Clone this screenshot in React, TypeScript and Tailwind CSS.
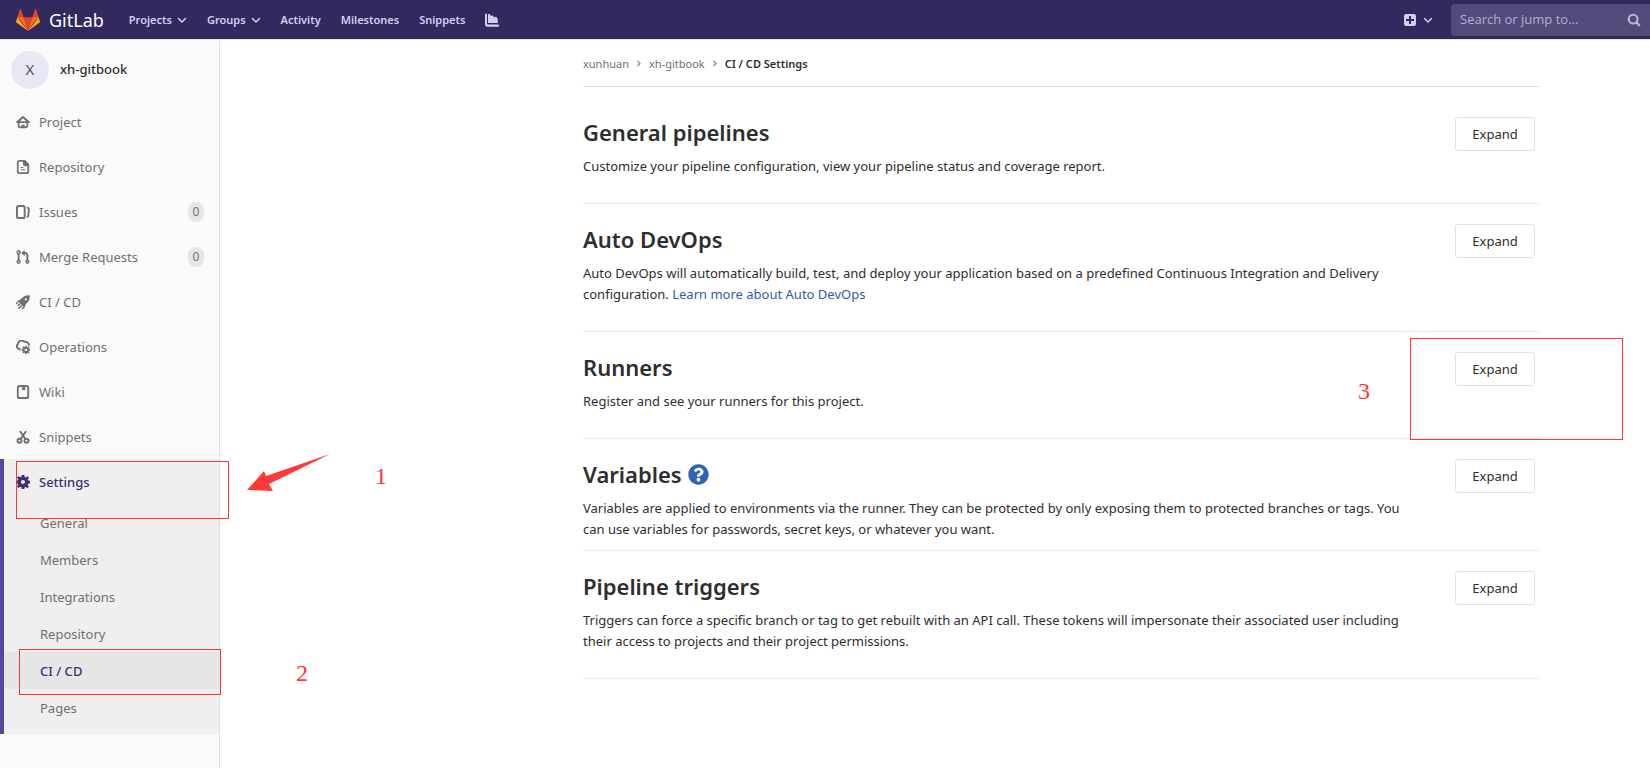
import React from "react";
import { FaQuestionCircle } from "react-icons/fa";

type IconProps = { className?: string };

function GitLabLogo({ className }: IconProps) {
  return (
    <svg viewBox="0 0 36 36" className={className} aria-hidden="true">
      <path fill="#e24329" d="M2 14l9.38 9v-9l-4-12.28c-.205-.632-1.176-.632-1.38 0z" />
      <path fill="#e24329" d="M34 14l-9.38 9v-9l4-12.28c.205-.632 1.176-.632 1.38 0z" />
      <path fill="#e24329" d="M18 34.38 11.38 14h13.24z" />
      <path fill="#fc6d26" d="M18 34.38 11.38 14H2l6 6z" />
      <path fill="#fc6d26" d="M18 34.38 24.62 14H34l-6 6z" />
      <path fill="#fca326" d="M2 14 .1 20.16c-.18.565 0 1.2.5 1.56l17.4 12.66z" />
      <path fill="#fca326" d="M34 14l1.9 6.16c.18.565 0 1.2-.5 1.56L18 34.38z" />
    </svg>
  );
}

function Caret() {
  return (
    <svg viewBox="0 0 10 8" className="h-2 w-[10px]" fill="none" stroke="currentColor" strokeWidth="1.5" strokeLinecap="round" strokeLinejoin="round" aria-hidden="true">
      <path d="m1.500 2.500 3.500 3.500 3.500-3.500" />
    </svg>
  );
}

function Chevron() {
  return (
    <svg viewBox="0 0 6 8" className="h-2 w-[6px]" fill="none" stroke="#888" strokeWidth="1.2" aria-hidden="true">
      <path d="m1.500 1 2.500 2.500-2.500 2.500" />
    </svg>
  );
}

function ChartIcon() {
  return (
    <svg viewBox="0 0 14 14" className="h-[14px] w-[14px] fill-current" aria-hidden="true">
      <path d="M0 1.500A1 1 0 0 1 2 1.500V10.500a1 1 0 0 0 1 1h10a1 1 0 0 1 0 2.200H2.500A2.500 2.500 0 0 1 0 11.200z" />
      <path d="M3 1.200 4.600 .8 6 3l1.500-.8 1.700 2.300L11 3.600l1.800 2.600V10H3z" />
    </svg>
  );
}

const icon = (children: React.ReactNode) => (
  <svg viewBox="0 0 16 16" className="size-[14px] shrink-0 fill-current" aria-hidden="true">
    {children}
  </svg>
);

const gear =
  "M6.500 0h3l.4 2.200 1.400.6L13 1.300 14.900 3.200l-1.400 1.800.6 1.400L16 6.600v2.900l-2 .4-.6 1.400 1.400 1.800-1.900 1.900-1.800-1.400-1.300.6L9.500 16h-3l-.4-2-1.300-.6L3 14.900 1.100 13l1.400-1.800L1.900 9.900 0 9.500v-3l2-.3.600-1.300L1.200 3.100 3.100 1.200l1.800 1.400 1.300-.5zM8 5.700a2.300 2.300 0 1 0 0 4.600 2.300 2.300 0 0 0 0-4.600z";

const icons = {
  project: icon(
    <path
      fillRule="evenodd"
      d="M8.700 1.300a1 1 0 0 0-1.400 0L.4 7.300A1 1 0 0 0 1 9h1v3a3 3 0 0 0 3 3h6a3 3 0 0 0 3-3V9h1a1 1 0 0 0 .6-1.700zM8 3.600 11.500 7h-7zM4 9h8v3a1 1 0 0 1-1 1h-1v-1a1 1 0 0 0-1-1H7a1 1 0 0 0-1 1v1H5a1 1 0 0 1-1-1z"
    />
  ),
  repository: icon(
    <path
      fillRule="evenodd"
      d="M4 0h6.500L15 4.500V13a3 3 0 0 1-3 3H4a3 3 0 0 1-3-3V3a3 3 0 0 1 3-3zm0 2a1 1 0 0 0-1 1v10a1 1 0 0 0 1 1h8a1 1 0 0 0 1-1V7h-3a2 2 0 0 1-2-2V2zm1.500 6h3v1.100h-3zm0 2.500h5v1.100h-5z"
    />
  ),
  issues: icon(
    <>
      <path fillRule="evenodd" d="M3 0h5a3 3 0 0 1 3 3v10a3 3 0 0 1-3 3H3a3 3 0 0 1-3-3V3a3 3 0 0 1 3-3zm0 2.200a.8.8 0 0 0-.8.8v10a.8.8 0 0 0 .8.8h5a.8.8 0 0 0 .8-.8V3a.8.8 0 0 0-.8-.8z" />
      <path d="M12.300 2c2.200.1 3.700 1.700 3.500 3.700l-.7 6.400c-.2 1.600-1.300 2.700-2.800 3v-2.400c.4-.2.600-.5.700-.9l.7-6.400c.1-.7-.5-1.200-1.400-1.300z" />
    </>
  ),
  merge: icon(
    <g fill="none" stroke="currentColor">
      <circle cx="3" cy="2.500" r="1.600" strokeWidth="1.700" />
      <circle cx="3" cy="13.500" r="1.600" strokeWidth="1.700" />
      <circle cx="13" cy="13.500" r="1.600" strokeWidth="1.700" />
      <path strokeWidth="2.200" d="M3 4v8M13 12V6a2.500 2.500 0 0 0-2.500-2.500H8.500" />
      <path fill="currentColor" stroke="none" d="M10 0v7L6 3.500z" />
    </g>
  ),
  rocket: icon(
    <>
      <path fillRule="evenodd" d="M15.600.600c.4 3.500-.6 6.700-4.200 9.700l-1.800 3.900-2-1.600-4.200-4.200L1.800 6.600l3.900-2C8.400 1.400 11.900-.2 15.600.600zM11.200 3.600a1.300 1.300 0 1 0 0 2.600 1.300 1.300 0 0 0 0-2.600z" />
      <path fill="none" stroke="currentColor" strokeWidth="1.800" strokeLinecap="round" d="M4 10.500 2.500 12M6 12.500 3.500 15M9 14 7.500 15.200M2 8.300 .9 9.500" />
    </>
  ),
  operations: icon(
    <>
      <path fill="none" stroke="currentColor" strokeWidth="2.200" strokeLinecap="round" d="M4.500 10.500A3.300 3.300 0 0 1 2 4.800 4.300 4.300 0 0 1 9.500 2c3-.4 5.200 1.200 5.300 3.800" />
      <path fillRule="evenodd" d={gear} transform="translate(6.500 6.500) scale(.6)" />
    </>
  ),
  wiki: icon(
    <path
      fillRule="evenodd"
      d="M4 0h8a3 3 0 0 1 3 3v10a3 3 0 0 1-3 3H4a3 3 0 0 1-3-3V3a3 3 0 0 1 3-3zm0 2.200a.9.9 0 0 0-.9.900v9.800a.9.9 0 0 0 .9.900h8a.9.9 0 0 0 .9-.9V3.100a.9.9 0 0 0-.9-.9h-1.500V6.500L8.800 5.300 7 6.500V2.200z"
    />
  ),
  snippets: icon(
    <g fill="none" stroke="currentColor">
      <circle cx="4" cy="12.300" r="2.300" strokeWidth="2.200" />
      <circle cx="12" cy="12.300" r="2.300" strokeWidth="2.200" />
      <path strokeWidth="2.200" strokeLinecap="round" d="M5.500 10 11 2M10.500 10 5 2" />
    </g>
  ),
  settings: icon(<path fillRule="evenodd" d={gear} />),
};

const navItems = [
  { label: "Project", icon: icons.project },
  { label: "Repository", icon: icons.repository },
  { label: "Issues", icon: icons.issues, count: 0 },
  { label: "Merge Requests", icon: icons.merge, count: 0 },
  { label: "CI / CD", icon: icons.rocket },
  { label: "Operations", icon: icons.operations },
  { label: "Wiki", icon: icons.wiki },
  { label: "Snippets", icon: icons.snippets },
];

const subItems = ["General", "Members", "Integrations", "Repository", "CI / CD", "Pages"];

const sections = [
  {
    title: "General pipelines",
    body: "Customize your pipeline configuration, view your pipeline status and coverage report.",
  },
  {
    title: "Auto DevOps",
    body: "Auto DevOps will automatically build, test, and deploy your application based on a predefined Continuous Integration and Delivery configuration.",
    link: "Learn more about Auto DevOps",
  },
  { title: "Runners", body: "Register and see your runners for this project.", boxed: true },
  {
    title: "Variables",
    body: "Variables are applied to environments via the runner. They can be protected by only exposing them to protected branches or tags. You can use variables for passwords, secret keys, or whatever you want.",
    help: true,
    tight: true,
  },
  {
    title: "Pipeline triggers",
    body: "Triggers can force a specific branch or tag to get rebuilt with an API call. These tokens will impersonate their associated user including their access to projects and their project permissions.",
  },
];

function Header() {
  return (
    <header className="flex h-10 items-center border-b border-[#e5e5e5] bg-[#32295f] text-[#d1d0ee]">
      <a href="#" className="ml-4 flex items-center gap-[9px] text-white">
        <GitLabLogo className="size-6" />
        <span className="text-lg leading-6">GitLab</span>
      </a>
      <nav className="ml-[25px] flex items-center gap-5 text-[11px] font-semibold">
        <a href="#" className="flex items-center gap-[5px]">Projects <Caret /></a>
        <a href="#" className="flex items-center gap-[5px]">Groups <Caret /></a>
        <a href="#">Activity</a>
        <a href="#">Milestones</a>
        <a href="#">Snippets</a>
        <a href="#" aria-label="Instance statistics"><ChartIcon /></a>
      </nav>
      <button aria-label="New" className="ml-auto flex items-center gap-[7px]">
        <svg viewBox="0 0 12 12" className="size-3" aria-hidden="true">
          <rect width="12" height="12" rx="2" fill="#d1d0ee" />
          <path d="M6 2v8M2 6h8" stroke="#32295f" strokeWidth="2" />
        </svg>
        <Caret />
      </button>
      <label className="ml-[18px] flex h-8 w-[199px] items-center rounded-l bg-[#524a7b] pr-[9px] pl-[9px]">
        <input
          aria-label="Search"
          placeholder="Search or jump to..."
          className="w-full min-w-0 bg-transparent font-['Open_Sans',sans-serif] text-[13px] text-white outline-none placeholder:text-[#b3aed4]"
        />
        <svg viewBox="0 0 16 16" className="size-[14px] shrink-0" fill="none" stroke="#b9b5d6" strokeWidth="2.500" strokeLinecap="round" aria-hidden="true">
          <circle cx="7" cy="7" r="5" />
          <path d="m11 11 3 3" />
        </svg>
      </label>
    </header>
  );
}

function Sidebar() {
  return (
    <aside className="relative w-[220px] shrink-0 border-r border-[#e1e1e1] bg-[#fafafa] text-[#707070]">
      <a href="#" className="flex h-[59px] items-center gap-[11px] pl-[11px] font-medium text-[#2e2e2e]">
        <span className="flex size-[38px] items-center justify-center rounded-full bg-[#e8e8f5] text-[15px] font-normal text-[#555]">X</span>
        xh-gitbook
      </a>
      <ul>
        {navItems.map((item) => (
          <li key={item.label}>
            <a href="#" className="flex h-[45px] items-center gap-[9px] pt-px pr-[15px] pl-4">
              {item.icon}
              {item.label}
              {item.count !== undefined && (
                <span className="ml-auto flex h-5 w-4 items-center justify-center rounded-full bg-[#e5e5e5] text-xs">{item.count}</span>
              )}
            </a>
          </li>
        ))}
        <li className="border-l-4 border-[#56489b] bg-[#efefef] pb-2">
          <a href="#" className="flex h-[45px] items-center gap-[9px] pt-px pl-3 font-medium text-[#393077]">
            {icons.settings}
            Settings
          </a>
          <ul>
            {subItems.map((label) => (
              <li key={label}>
                <a
                  href="#"
                  className={
                    label === "CI / CD"
                      ? "flex h-[37px] items-center bg-[#e6e6e6] pt-px pl-9 font-medium text-[#393077]"
                      : "flex h-[37px] items-center pt-px pl-9"
                  }
                >
                  {label}
                </a>
              </li>
            ))}
          </ul>
        </li>
      </ul>
      <Annotations />
    </aside>
  );
}

function Annotations() {
  return (
    <div className="pointer-events-none absolute inset-0 text-[#ff3434]">
      <div className="absolute top-[421px] left-4 h-[58px] w-[213px] border border-[#ff3434]" />
      <svg viewBox="0 0 84 38" className="absolute top-[414px] left-[246px] h-[38px] w-[84px]" aria-hidden="true">
        <path fill="#ff3838" d="M84 0 23 30l4 7-26-1L18 17l2 5z" />
      </svg>
      <div className="absolute top-[609px] left-[19px] h-[46px] w-[202px] border border-[#ff3434]" />
      <span className="absolute top-[420px] left-[375px] font-['Liberation_Serif',serif] text-2xl">1</span>
      <span className="absolute top-[617px] left-[296px] font-['Liberation_Serif',serif] text-2xl">2</span>
    </div>
  );
}

export default function App() {
  return (
    <div className="flex min-h-screen flex-col bg-white font-['Noto_Sans',sans-serif] text-[13px] leading-[21px] text-[#2e2e2e]">
      <Header />
      <div className="flex grow">
        <Sidebar />
        <main className="min-w-0 grow pr-[110px] pl-[363px]">
          <nav aria-label="Breadcrumb" className="flex h-[47px] items-center gap-[7px] border-b border-[#e1e1e1] pt-px text-[11px] text-[#707070]">
            <a href="#">xunhuan</a>
            <Chevron />
            <a href="#">xh-gitbook</a>
            <Chevron />
            <span className="font-semibold text-[#2e2e2e]">CI / CD Settings</span>
          </nav>
          <div className="pt-[10px]">
            {sections.map((s) => (
              <section
                key={s.title}
                className={
                  s.tight
                    ? "relative flex items-start justify-between gap-10 border-b border-[#ececec] pt-[19px] pb-[10px]"
                    : "relative flex items-start justify-between gap-10 border-b border-[#ececec] pt-[19px] pb-[26px]"
                }
              >
                <div>
                  <h2 className="flex items-center gap-[6px] text-[22px] leading-8 font-semibold">
                    {s.title}
                    {s.help && <FaQuestionCircle className="size-[21px] text-[#2f64b4]" />}
                  </h2>
                  <p className="mt-2">
                    {s.body}
                    {s.link && " "}
                    {s.link && <a href="#" className="text-[#2f5ca8]">{s.link}</a>}
                  </p>
                </div>
                <button className="mt-px mr-[5px] h-[34px] w-20 shrink-0 rounded-[3px] border border-[#e1e1e1]">Expand</button>
                {s.boxed && (
                  <div className="pointer-events-none absolute top-[6px] -right-[83px] h-[102px] w-[213px] border border-[#ff3434]">
                    <span className="absolute top-9 -left-[53px] font-['Liberation_Serif',serif] text-2xl text-[#ff3434]">3</span>
                  </div>
                )}
              </section>
            ))}
          </div>
        </main>
      </div>
    </div>
  );
}
